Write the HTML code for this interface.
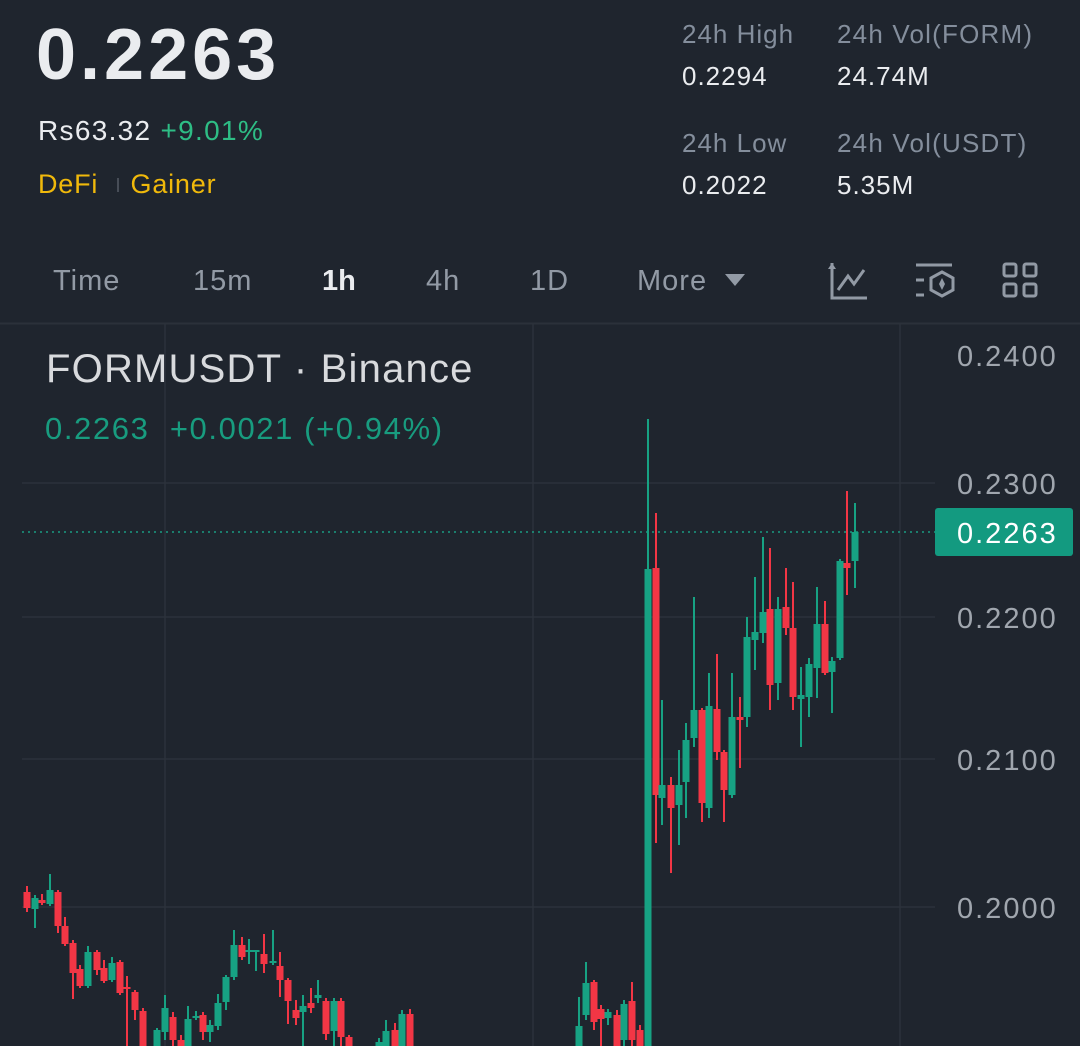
<!DOCTYPE html>
<html><head><meta charset="utf-8"><style>
html,body{margin:0;padding:0;background:#1f252e;width:1080px;height:1046px;overflow:hidden;font-family:"Liberation Sans",sans-serif}
.a{position:absolute;white-space:nowrap}
</style></head><body>
<div class="a" style="left:36px;top:14px;font-size:72px;font-weight:bold;color:#eaecef;letter-spacing:4px">0.2263</div>
<div class="a" style="left:38px;top:115px;font-size:28px;color:#eaecef;letter-spacing:1.3px">Rs63.32 <span style="color:#2ebd85">+9.01%</span></div>
<div class="a" style="left:38px;top:169px;font-size:27px;color:#f0b90b;letter-spacing:0.8px">DeFi <span style="display:inline-block;width:2px;height:14px;background:#474d57;margin:0 12px 2px 10px;vertical-align:middle"></span>Gainer</div>
<div class="a" style="left:682px;top:19px;font-size:26px;color:#848e9c;letter-spacing:1px">24h High</div>
<div class="a" style="left:682px;top:61px;font-size:26px;color:#eaecef;letter-spacing:1px">0.2294</div>
<div class="a" style="left:682px;top:128px;font-size:26px;color:#848e9c;letter-spacing:1px">24h Low</div>
<div class="a" style="left:682px;top:170px;font-size:26px;color:#eaecef;letter-spacing:1px">0.2022</div>
<div class="a" style="left:837px;top:19px;font-size:26px;color:#848e9c;letter-spacing:1.2px">24h Vol(FORM)</div>
<div class="a" style="left:837px;top:61px;font-size:26px;color:#eaecef;letter-spacing:1px">24.74M</div>
<div class="a" style="left:837px;top:128px;font-size:26px;color:#848e9c;letter-spacing:1.2px">24h Vol(USDT)</div>
<div class="a" style="left:837px;top:170px;font-size:26px;color:#eaecef;letter-spacing:1px">5.35M</div>

<div class="a" style="left:53px;top:265px;font-size:29px;color:#929aa5;letter-spacing:1px">Time</div>
<div class="a" style="left:193px;top:265px;font-size:29px;color:#929aa5;letter-spacing:1px">15m</div>
<div class="a" style="left:322px;top:265px;font-size:29px;color:#eaecef;font-weight:bold">1h</div>
<div class="a" style="left:426px;top:265px;font-size:29px;color:#929aa5;letter-spacing:1px">4h</div>
<div class="a" style="left:530px;top:265px;font-size:29px;color:#929aa5;letter-spacing:1px">1D</div>
<div class="a" style="left:637px;top:265px;font-size:29px;color:#929aa5;letter-spacing:1px">More</div>
<svg class="a" style="left:0;top:0" width="1080" height="1046">
<path d="M725 274h20l-10 12z" fill="#929aa5"/>
<g stroke="#929aa5" stroke-width="3" fill="none">
<path d="M832 263v35h35"/><path d="M838 290l10-14 6 8 10-14"/>
<path d="M916 265h36M916 280h8M916 295h8"/><path d="M942 272l11 6v12l-11 6-11-6v-12z"/>
<rect x="1004" y="264" width="12" height="12" rx="2"/><rect x="1024" y="264" width="12" height="12" rx="2"/>
<rect x="1004" y="284" width="12" height="12" rx="2"/><rect x="1024" y="284" width="12" height="12" rx="2"/>
</g>
<path d="M942 278l3 6-3 6-3-6z" fill="#929aa5"/>
<path d="M832 263l4 6h-8z" fill="#929aa5"/>
<line x1="0" y1="323.5" x2="1080" y2="323.5" stroke="#2b313a" stroke-width="2"/>
<g stroke="#2c323b" stroke-width="1.5">
<line x1="22" y1="483" x2="935" y2="483"/><line x1="22" y1="617" x2="935" y2="617"/>
<line x1="22" y1="759" x2="935" y2="759"/><line x1="22" y1="907" x2="935" y2="907"/>
<line x1="165" y1="324" x2="165" y2="1046"/><line x1="533" y1="324" x2="533" y2="1046"/><line x1="900" y1="324" x2="900" y2="1046"/>
</g>
<line x1="22" y1="532" x2="935" y2="532" stroke="#1a9c82" stroke-width="1.5" stroke-dasharray="2 4"/>
<g id="c"></g>
<rect x="935" y="508" width="138" height="48" rx="3" fill="#139a80"/>
<g font-family="Liberation Sans,sans-serif" font-size="29" fill="#a0a6ae" letter-spacing="2">
<text x="957" y="366">0.2400</text><text x="957" y="494">0.2300</text>
<text x="957" y="628">0.2200</text><text x="957" y="770">0.2100</text><text x="957" y="918">0.2000</text>
<text x="957" y="543" fill="#fff">0.2263</text>
</g>
<text x="46" y="382" font-family="Liberation Sans,sans-serif" font-size="40" fill="#d8dadd" letter-spacing="1.2">FORMUSDT · Binance</text>
<text x="45" y="439" font-family="Liberation Sans,sans-serif" font-size="31" fill="#189c7f" letter-spacing="1.6" xml:space="preserve">0.2263  +0.0021 (+0.94%)</text>
</svg>
<script>
var d=[[27,892,908,886,912,'r'],[35,898,909,895,928,'g'],[42,900,903,894,905,'r'],[50,890,904,874,906,'g'],[58,892,926,890,933,'r'],[65,926,944,917,946,'r'],[73,943,973,940,999,'r'],[80,969,986,965,988,'r'],[88,952,986,946,988,'g'],[97,952,970,950,975,'r'],[104,968,981,960,983,'r'],[112,963,980,957,982,'g'],[120,962,993,960,995,'r'],[127,987,989,976,1046,'r'],[135,992,1010,990,1020,'r'],[143,1011,1046,1008,1046,'r'],[157,1030,1046,1028,1046,'g'],[165,1008,1032,995,1040,'g'],[173,1017,1040,1012,1046,'r'],[181,1040,1046,1035,1046,'r'],[188,1019,1046,1006,1046,'g'],[196,1016,1018,1011,1020,'g'],[203,1015,1032,1012,1040,'r'],[210,1025,1032,1020,1042,'g'],[218,1003,1026,994,1030,'g'],[226,977,1002,975,1010,'g'],[234,945,977,930,980,'g'],[242,945,957,937,960,'r'],[249,950,952,939,964,'g'],[256,950,952,950,971,'g'],[264,954,964,934,973,'r'],[273,961,963,930,965,'g'],[280,966,980,952,997,'r'],[288,980,1001,978,1024,'r'],[296,1010,1018,1000,1025,'r'],[303,1006,1012,995,1046,'g'],[311,1003,1008,988,1013,'r'],[318,995,998,980,1003,'g'],[326,1001,1034,998,1040,'r'],[334,1001,1031,998,1046,'g'],[341,1001,1037,998,1046,'r'],[349,1037,1046,1035,1046,'r'],[379,1042,1046,1038,1046,'g'],[386,1031,1046,1020,1046,'g'],[395,1030,1046,1023,1046,'r'],[402,1014,1046,1010,1046,'g'],[410,1014,1046,1009,1046,'r'],
[579,1026,1046,997,1046,'g'],[586,983,1015,962,1020,'g'],[594,982,1022,980,1030,'r'],[601,1009,1019,1005,1046,'r'],[608,1012,1018,1009,1025,'g'],[617,1015,1046,1010,1046,'r'],[624,1004,1040,1000,1046,'g'],[632,1001,1040,982,1046,'r'],[640,1030,1046,1025,1046,'r'],
[648,569,1046,419,1046,'g'],[656,568,795,513,843,'r'],[662,785,798,700,825,'g'],[671,785,808,777,873,'r'],[679,785,805,750,845,'g'],[686,740,782,723,818,'g'],[694,710,738,597,747,'g'],[702,710,803,708,822,'r'],[709,706,808,673,818,'g'],[717,709,752,654,760,'r'],[724,752,790,750,822,'r'],[732,717,795,673,798,'g'],[740,717,720,697,768,'r'],[747,637,717,617,727,'g'],[755,632,640,577,670,'g'],[763,612,633,537,643,'g'],[770,609,685,548,710,'r'],[778,609,683,597,700,'g'],[786,607,628,568,635,'r'],[793,628,697,582,710,'r'],[801,695,699,667,747,'g'],[809,664,697,658,717,'g'],[817,624,668,587,698,'g'],[825,624,673,601,675,'r'],[832,661,672,657,713,'g'],[840,561,658,559,660,'g'],[847,563,568,491,595,'r'],[855,532,561,503,588,'g']];
var s='';d.forEach(function(c){var col=c[5]=='g'?'#17a283':'#f23645';s+='<rect x="'+(c[0]-1)+'" y="'+c[3]+'" width="2" height="'+(c[4]-c[3])+'" fill="'+col+'"/><rect x="'+(c[0]-3.5)+'" y="'+c[1]+'" width="7" height="'+Math.max(2,c[2]-c[1])+'" fill="'+col+'"/>';});
document.getElementById('c').innerHTML=s;
</script>
</body></html>
